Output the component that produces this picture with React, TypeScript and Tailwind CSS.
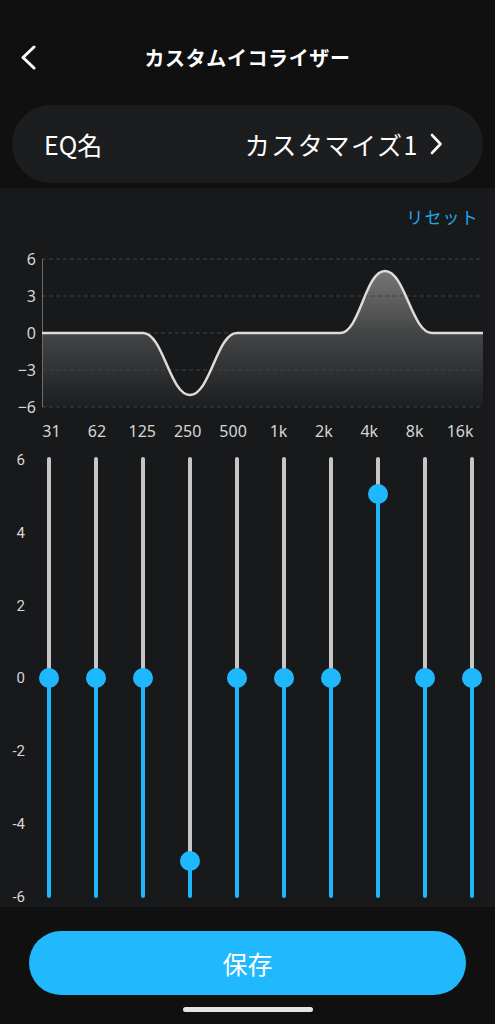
import React from "react";

const BANDS = [0, 0, 0, -5, 0, 0, 0, 5, 0, 0];
const FREQS = ["31", "62", "125", "250", "500", "1k", "2k", "4k", "8k", "16k"];
const TRACK_H = 441;

function ResponseChart() {
  const grid = [14, 51, 88, 125, 162];
  const labels = ["6", "3", "0", "\u22123", "\u22126"];
  const curve =
    "M42,88 L143,88 C163,88 170,150 190,150 C210,150 217,88 237,88 L340,88 C360,88 365,26 385,26 C405,26 412,88 432,88 L483,88";
  return (
    <svg width="495" height="200" viewBox="0 0 495 200" className="block">
      <defs>
        <linearGradient id="eqfill" x1="0" y1="26" x2="0" y2="162" gradientUnits="userSpaceOnUse">
          <stop offset="0" stopColor="#767676" />
          <stop offset="0.45" stopColor="#444546" />
          <stop offset="1" stopColor="#1d1e20" />
        </linearGradient>
      </defs>
      <path d={`${curve} L483,162 L42,162 Z`} fill="url(#eqfill)" />
      {grid.map((y) => (
        <line key={y} x1="42" y1={y} x2="483" y2={y} stroke="#414245" strokeWidth="1" strokeDasharray="4 3" />
      ))}
      <line x1="42.5" y1="14" x2="42.5" y2="162" stroke="#6b6c6e" strokeWidth="1" />
      <path d={curve} fill="none" stroke="#dcdcdc" strokeWidth="2.5" />
      {labels.map((l, i) => (
        <text
          key={l}
          x="36"
          y={grid[i] + 6}
          textAnchor="end"
          fontSize="16"
          fill="#d6d6d6"
          fontFamily="'Noto Sans', sans-serif"
        >
          {l}
        </text>
      ))}
      {FREQS.map((f, i) => (
        <text
          key={f}
          x={51.5 + i * 45.4}
          y="192"
          textAnchor="middle"
          fontSize="16"
          fill="#d6d6d6"
          fontFamily="'Noto Sans', sans-serif"
        >
          {f}
        </text>
      ))}
    </svg>
  );
}

function Slider({ value }: { value: number }) {
  const top = ((6 - value) / 12) * TRACK_H;
  return (
    <div className="relative flex h-[441px] justify-center">
      <div className="flex h-full w-[4px] flex-col overflow-hidden rounded-full">
        <div className="bg-[#c6c6c6]" style={{ height: top }} />
        <div className="flex-1 bg-[#1fb6fb]" />
      </div>
      <div
        className="absolute left-1/2 h-[20px] w-[20px] -translate-x-1/2 -translate-y-1/2 rounded-full bg-[#20b8fd]"
        style={{ top }}
      />
    </div>
  );
}

export default function App() {
  return (
    <div className="flex h-[1024px] w-[495px] flex-col bg-[#101010] font-['Noto_Sans_CJK_JP',sans-serif] text-white">
      {/* Header */}
      <div className="h-[105px] pt-[34px]">
        <div className="relative flex h-[48px] items-center justify-center">
          <svg
            className="absolute left-[19px] top-[11px]"
            width="20"
            height="26"
            viewBox="0 0 20 26"
            fill="none"
            stroke="#fafafa"
            strokeWidth="3"
            strokeLinecap="round"
            strokeLinejoin="round"
          >
            <path d="M15 2 L4 12.5 L15 23" />
          </svg>
          <h1 className="text-[20px] font-bold leading-7 tracking-[0.6px]">カスタムイコライザー</h1>
        </div>
      </div>

      {/* EQ name card */}
      <div className="mx-[12px] flex h-[78px] items-center justify-between rounded-full bg-[#1c1d1f] pl-[32px] pr-[40px]">
        <span className="text-[25px] leading-8">EQ名</span>
        <div className="flex items-center gap-[10px]">
          <span className="text-[25px] leading-8 tracking-[1.6px]">カスタマイズ1</span>
          <svg width="14" height="22" viewBox="0 0 14 22" fill="none" stroke="#fafafa" strokeWidth="2.6" strokeLinecap="round" strokeLinejoin="round">
            <path d="M3 2 L11.5 11 L3 20" />
          </svg>
        </div>
      </div>

      {/* EQ panel */}
      <div className="mt-[5px] h-[719px] bg-[#18191b] pt-[17px]">
        <div className="flex justify-end pr-[16px]">
          <button className="text-[17px] leading-6 tracking-[1.2px] text-[#1da9ec]">リセット</button>
        </div>
        <div className="mt-[16px]">
          <ResponseChart />
        </div>
        <div className="mt-[12px] flex">
          <div className="-mt-[5px] flex h-[453px] w-[26px] flex-col justify-between pr-[1px] text-right font-['Roboto',sans-serif] text-[15px] leading-4 text-[#d6d6d6]">
            {["6", "4", "2", "0", "-2", "-4", "-6"].map((l) => (
              <span key={l}>{l}</span>
            ))}
          </div>
          <div className="grid w-[470px] grid-cols-10">
            {BANDS.map((v, i) => (
              <Slider key={i} value={v} />
            ))}
          </div>
        </div>
      </div>

      {/* Save */}
      <button className="mx-[29px] mt-[24px] flex h-[64px] items-center justify-center rounded-full bg-[#21b8fd] text-[25px] leading-8 text-white">
        保存
      </button>
      <div className="mx-auto mt-[12px] h-[5px] w-[130px] rounded-full bg-[#e4e4e4]" />
    </div>
  );
}
